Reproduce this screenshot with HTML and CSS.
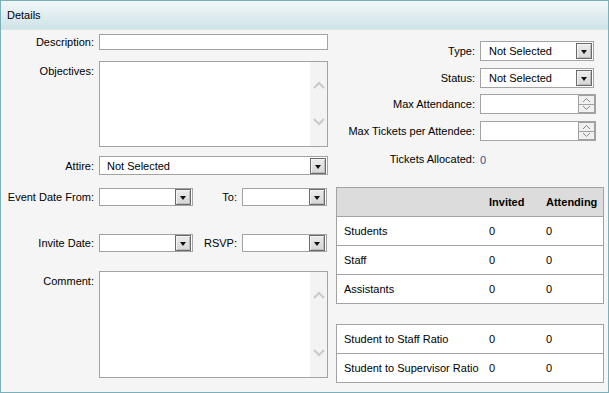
FILE: index.html
```html
<!DOCTYPE html>
<html lang="en">
<head>
    <meta charset="UTF-8">
    <title>Details</title>
    <link rel="stylesheet" href="styles.css">
</head>
<body>
    <div class="panel">
        <div class="panel-head">Details</div>
        <div class="panel-body">
            <div class="col-left">
                <div class="row r-desc">
                    <label class="lbl">Description:</label>
                    <div class="field full"></div>
                </div>
                <div class="row r-obj top">
                    <label class="lbl">Objectives:</label>
                    <div class="field full area">
                        <div class="vscroll">
                            <svg width="12" height="8" viewBox="0 0 12 8"><path d="M1 7 L6 2 L11 7" fill="none" stroke="#c9c9c9" stroke-width="2"/></svg>
                            <svg width="12" height="8" viewBox="0 0 12 8"><path d="M1 1 L6 6 L11 1" fill="none" stroke="#c9c9c9" stroke-width="2"/></svg>
                        </div>
                    </div>
                </div>
                <div class="row r-attire">
                    <label class="lbl">Attire:</label>
                    <div class="field full select">
                        <span class="sel-text">Not Selected</span>
                        <span class="drop"></span>
                    </div>
                </div>
                <div class="row r-event">
                    <label class="lbl">Event Date From:</label>
                    <div class="field date"><span class="drop"></span></div>
                    <label class="lbl-mid">To:</label>
                    <div class="field date short"><span class="drop"></span></div>
                </div>
                <div class="row r-invite">
                    <label class="lbl">Invite Date:</label>
                    <div class="field date"><span class="drop"></span></div>
                    <label class="lbl-mid">RSVP:</label>
                    <div class="field date short"><span class="drop"></span></div>
                </div>
                <div class="row r-comment top">
                    <label class="lbl">Comment:</label>
                    <div class="field full area">
                        <div class="vscroll">
                            <svg width="12" height="8" viewBox="0 0 12 8"><path d="M1 7 L6 2 L11 7" fill="none" stroke="#c9c9c9" stroke-width="2"/></svg>
                            <svg width="12" height="8" viewBox="0 0 12 8"><path d="M1 1 L6 6 L11 1" fill="none" stroke="#c9c9c9" stroke-width="2"/></svg>
                        </div>
                    </div>
                </div>
            </div>

            <div class="col-right">
                <div class="row r-type">
                    <label class="lbl-r">Type:</label>
                    <div class="field select sel-r">
                        <span class="sel-text">Not Selected</span>
                        <span class="drop"></span>
                    </div>
                </div>
                <div class="row r-status">
                    <label class="lbl-r">Status:</label>
                    <div class="field select sel-r">
                        <span class="sel-text">Not Selected</span>
                        <span class="drop"></span>
                    </div>
                </div>
                <div class="row r-max">
                    <label class="lbl-r">Max Attendance:</label>
                    <div class="field spin">
                        <div class="spin-btns">
                            <span class="spin-btn"><svg width="9" height="6" viewBox="0 0 9 6"><path d="M1 5 L4.5 1.5 L8 5" fill="none" stroke="#888" stroke-width="1"/></svg></span>
                            <span class="spin-btn"><svg width="9" height="6" viewBox="0 0 9 6"><path d="M1 1 L4.5 4.5 L8 1" fill="none" stroke="#888" stroke-width="1"/></svg></span>
                        </div>
                    </div>
                </div>
                <div class="row r-tickets">
                    <label class="lbl-r">Max Tickets per Attendee:</label>
                    <div class="field spin">
                        <div class="spin-btns">
                            <span class="spin-btn"><svg width="9" height="6" viewBox="0 0 9 6"><path d="M1 5 L4.5 1.5 L8 5" fill="none" stroke="#888" stroke-width="1"/></svg></span>
                            <span class="spin-btn"><svg width="9" height="6" viewBox="0 0 9 6"><path d="M1 1 L4.5 4.5 L8 1" fill="none" stroke="#888" stroke-width="1"/></svg></span>
                        </div>
                    </div>
                </div>
                <div class="row r-alloc">
                    <label class="lbl-r">Tickets Allocated:</label>
                    <span class="alloc-val">0</span>
                </div>

                <table class="grid grid-counts">
                    <tr class="head">
                        <th></th>
                        <th>Invited</th>
                        <th>Attending</th>
                    </tr>
                    <tr><td>Students</td><td>0</td><td>0</td></tr>
                    <tr><td>Staff</td><td>0</td><td>0</td></tr>
                    <tr><td>Assistants</td><td>0</td><td>0</td></tr>
                </table>

                <table class="grid grid-ratio">
                    <tr><td>Student to Staff Ratio</td><td>0</td><td>0</td></tr>
                    <tr><td>Student to Supervisor Ratio</td><td>0</td><td>0</td></tr>
                </table>
            </div>
        </div>
    </div>
</body>
</html>
```

FILE: styles.css
```css
body {
    margin: 0;
    font-family: 'Liberation Sans', Arial, sans-serif;
    font-size: 11px;
    color: #000;
    background: #f5f5f5;
}

.panel {
    width: 609px;
    height: 393px;
    box-sizing: border-box;
    border: 1px solid #7cb0b8;
    background-color: #f5f5f5;
}

.panel-head {
    height: 28px;
    line-height: 28px;
    padding-left: 6px;
    font-size: 11px;
    color: #000;
    background: linear-gradient(#f2f7f8, #cfe3e7);
    border-bottom: 1px solid #d6e6e9;
}

.panel-body {
    display: flex;
}

.col-left {
    width: 335px;
    padding-left: 5px;
    box-sizing: border-box;
}

.col-right {
    width: 272px;
    padding-right: 5px;
    box-sizing: border-box;
}

.row {
    display: flex;
    align-items: center;
}

.row.top {
    align-items: flex-start;
}

.lbl {
    width: 88px;
    text-align: right;
    margin-right: 5px;
    flex-shrink: 0;
}

.row.top .lbl {
    padding-top: 4px;
}

.lbl-mid {
    width: 44px;
    text-align: right;
    margin-right: 5px;
}

.lbl-r {
    width: 139px;
    text-align: right;
    margin-right: 5px;
    flex-shrink: 0;
}

.field {
    position: relative;
    box-sizing: border-box;
    background: #fff;
    border: 1px solid #a3a3a3;
}

.full {
    width: 229px;
}

/* left rows */
.r-desc { margin-top: 4px; }
.r-desc .field { height: 16px; }

.r-obj { margin-top: 11px; }
.r-obj .field { height: 86px; }

.r-attire { margin-top: 9px; }
.r-attire .field { height: 19px; }

.r-event { margin-top: 13px; }
.r-invite { margin-top: 28px; }

.r-comment { margin-top: 19px; }
.r-comment .field { height: 107px; }

.date {
    width: 94px;
    height: 18px;
}

.date.short {
    width: 85px;
}

/* textarea scrollbar */
.vscroll {
    position: absolute;
    top: 0;
    right: 0;
    bottom: 0;
    width: 17px;
    background: #f3f3f3;
    display: flex;
    flex-direction: column;
    justify-content: space-between;
    align-items: center;
    padding: 19px 0 20px;
    box-sizing: border-box;
}

.vscroll svg {
    display: block;
}

/* selects */
.select {
    display: flex;
    align-items: center;
}

.sel-text {
    padding-left: 7px;
}

.drop {
    position: absolute;
    right: 1px;
    top: 50%;
    margin-top: -8px;
    width: 16px;
    height: 16px;
    box-sizing: border-box;
    border: 1px solid #6a6a6a;
    box-shadow: inset 1px 1px 0 #f4f4f4, inset -1px -1px 0 #bdbdbd;
    background: linear-gradient(#ececec, #d6d6d6);
}

.drop::after {
    content: "";
    position: absolute;
    left: 4px;
    top: 6px;
    border-left: 3.5px solid transparent;
    border-right: 3.5px solid transparent;
    border-top: 4px solid #111;
}

/* right rows */
.r-type { margin-top: 11px; }
.r-status { margin-top: 7px; }
.r-max { margin-top: 6px; }
.r-tickets { margin-top: 7px; }
.r-alloc { margin-top: 11px; height: 14px; }

.sel-r {
    width: 114px;
    height: 20px;
}

.sel-r .sel-text {
    padding-left: 8px;
}

.spin {
    width: 116px;
    height: 20px;
}

.spin-btns {
    position: absolute;
    right: 0;
    top: 0;
    width: 17px;
    height: 18px;
    display: flex;
    flex-direction: column;
}

.spin-btn {
    flex: 1;
    border: 1px solid #a0a0a0;
    background: #f0f0f0;
    display: flex;
    align-items: center;
    justify-content: center;
}

.spin-btn + .spin-btn {
    border-top: none;
}

.alloc-val {
    color: #2a5090;
    padding-top: 2px;
}

/* tables */
.grid {
    width: 268px;
    border-collapse: collapse;
    background: #fff;
    border: 1px solid #a3a3a3;
}

.grid-counts {
    margin-top: 21px;
}

.grid-ratio {
    margin-top: 20px;
}

.grid td,
.grid th {
    padding: 0 0 0 7px;
    height: 28px;
    text-align: left;
    border-top: 1px solid #a3a3a3;
}

.grid th {
    font-weight: bold;
    background: #dcdcdc;
    height: 28px;
}

.grid td:first-child,
.grid th:first-child {
    width: 138px;
}

.grid td:nth-child(2),
.grid th:nth-child(2) {
    width: 50px;
}
```
